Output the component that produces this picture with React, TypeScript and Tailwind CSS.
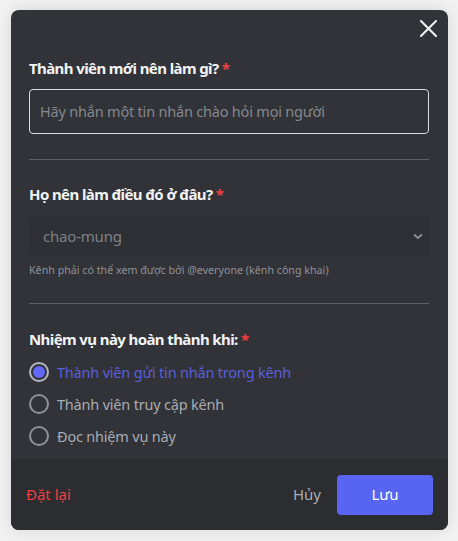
import React from "react";

function Radio({ label, checked }: { label: string; checked?: boolean }) {
  return (
    <div className="flex items-center h-[32px]">
      <div
        className={
          "w-[20px] h-[20px] rounded-full border-2 flex items-center justify-center " +
          (checked ? "border-[#b5b8be]" : "border-[#8f9299]")
        }
      >
        {checked && <div className="w-[12px] h-[12px] rounded-full bg-[#6068f5]" />}
      </div>
      <span
        className={
          "ml-[8px] text-[14.5px] leading-[20px] tracking-[-0.2px] " +
          (checked ? "text-[#5b5fd8]" : "text-[#a9acb2]")
        }
      >
        {label}
      </span>
    </div>
  );
}

export default function App() {
  return (
    <div
      className="w-[458px] h-[541px] bg-[#f2f2f2] pt-[10px] pl-[11px]"
      style={{ fontFamily: '"Noto Sans", "Open Sans", sans-serif' }}
    >
      <div className="relative w-[437px] h-[520px] rounded-[8px] overflow-hidden bg-[#313338] flex flex-col shadow-[0_0_16px_rgba(0,0,0,0.12)]">
        <button className="absolute top-[10px] right-[11px] w-[17px] h-[17px]">
          <svg width="17" height="17" viewBox="0 0 17 17">
            <path d="M1 1L16 16M16 1L1 16" stroke="#f2f3f5" strokeWidth="2" strokeLinecap="square" />
          </svg>
        </button>

        <div className="flex-1 pl-[18px] pr-[19px] pt-[48px]">
          <div className="text-[15px] leading-[20px] font-bold tracking-[-0.6px] text-[#f2f3f5]">
            Thành viên mới nên làm gì? <span className="text-[#f23f42]">*</span>
          </div>
          <div className="mt-[11px] h-[45px] rounded-[4px] border border-[#d8dadf] flex items-center px-[10px]">
            <span className="text-[14.5px] tracking-[-0.2px] text-[#85888e]">Hãy nhắn một tin nhắn chào hỏi mọi người</span>
          </div>
          <div className="mt-[25px] h-px bg-[#5d5f66]" />

          <div className="mt-[24px] text-[15px] leading-[20px] font-bold tracking-[-0.6px] text-[#f2f3f5]">
            Họ nên làm điều đó ở đâu? <span className="text-[#f23f42]">*</span>
          </div>
          <div className="mt-[11px] h-[42px] rounded-[4px] bg-[#2e3035] flex items-center justify-between pl-[14px] pr-[4px]">
            <span className="text-[15px] tracking-[-0.2px] text-[#7d8086]">chao-mung</span>
            <svg width="10" height="7" viewBox="0 0 10 7" className="mr-[2px]">
              <path d="M1 1.5L5 5L9 1.5" stroke="#8a8d93" strokeWidth="2" fill="none" />
            </svg>
          </div>
          <div className="mt-[5px] text-[10.7px] leading-[16px] text-[#8f9298]">
            Kênh phải có thể xem được bởi @everyone (kênh công khai)
          </div>
          <div className="mt-[25px] h-px bg-[#5d5f66]" />

          <div className="mt-[25px] text-[15px] leading-[20px] font-bold tracking-[-0.6px] text-[#f2f3f5]">
            Nhiệm vụ này hoàn thành khi: <span className="text-[#f23f42]">*</span>
          </div>
          <div className="mt-[7px] flex flex-col">
            <Radio label="Thành viên gửi tin nhắn trong kênh" checked />
            <Radio label="Thành viên truy cập kênh" />
            <Radio label="Đọc nhiệm vụ này" />
          </div>
        </div>

        <div className="h-[71px] bg-[#2b2d31] flex items-center pl-[15px] pr-[15px]">
          <span className="text-[15px] text-[#f23f42]">Đặt lại</span>
          <div className="flex-1" />
          <span className="text-[15px] text-[#a9acb2] mr-[16px]">Hủy</span>
          <button className="w-[96px] h-[40px] rounded-[4px] bg-[#5865f2] text-white text-[15px]">Lưu</button>
        </div>
      </div>
    </div>
  );
}
